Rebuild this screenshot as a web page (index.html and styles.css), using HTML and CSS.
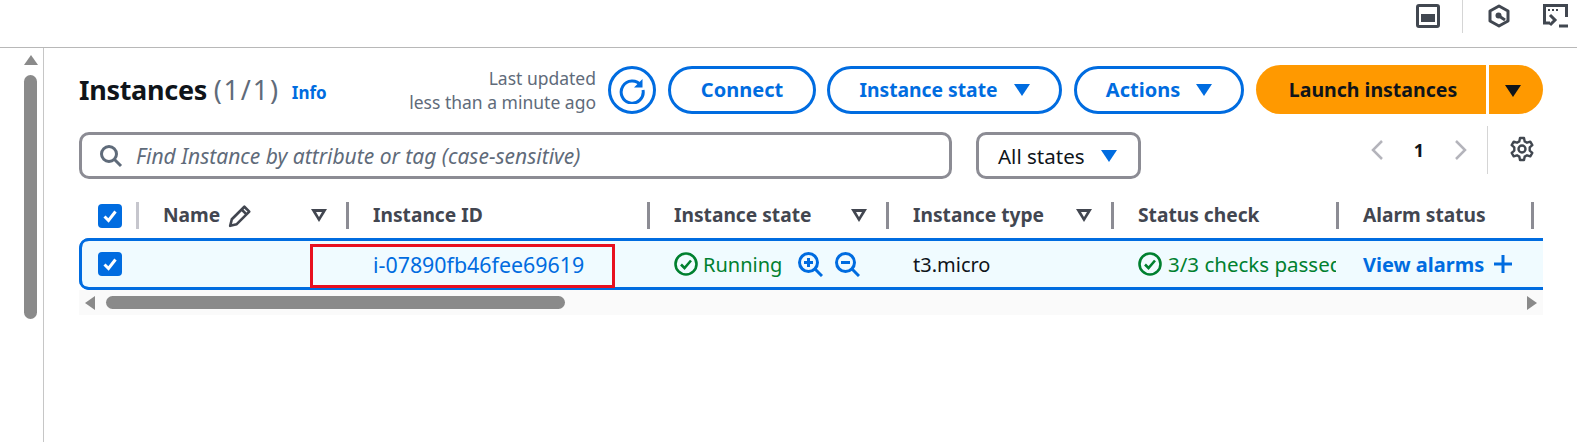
FILE: index.html

```html
<!DOCTYPE html>
<html lang="en">
<head>
  <meta charset="UTF-8">
  <title>Instances</title>
  <link rel="stylesheet" href="styles.css">
</head>
<body>
  <div class="top-bar">
    <svg class="top-icon" width="24" height="24" viewBox="0 0 24 24"><rect x="1.5" y="1.5" width="21" height="21" rx="1.5" fill="none" stroke="#414750" stroke-width="3"/><rect x="5" y="10" width="14" height="8" fill="#414750"/></svg>
    <span class="top-divider"></span>
    <svg class="top-icon" width="24" height="24" viewBox="0 0 24 24"><path d="M12 2 21 7v10l-9 5-9-5V7z" fill="none" stroke="#414750" stroke-width="3" stroke-linejoin="round"/><circle cx="11.5" cy="11.5" r="3" fill="#414750"/><path d="M12 12l6 4" stroke="#414750" stroke-width="3"/></svg>
    <svg class="top-icon" width="25" height="26" viewBox="0 0 25 26"><path d="M7 19H1.500V1.500h22V13" fill="none" stroke="#414750" stroke-width="3"/><path d="M5 5h2v2H5zM9 5h2v2H9zM13 5h2v2h-2z" fill="#414750"/><path d="M7 11l5 5-5 5" fill="none" stroke="#414750" stroke-width="3"/><path d="M16 22h9" stroke="#414750" stroke-width="3"/></svg>
  </div>

  <div class="page">
    <div class="side-scroll">
      <span class="arrow-up"></span>
      <span class="side-thumb"></span>
    </div>

    <div class="content">
      <div class="head-row">
        <h1>Instances <span class="count">(1/1)</span></h1>
        <a class="info">Info</a>
        <div class="updated">Last updated<br>less than a minute ago</div>
        <button class="btn btn-round" aria-label="Refresh">
          <svg width="28" height="28" viewBox="0 0 28 28"><path d="M23 9.500A11 11 0 1 0 25 14" fill="none" stroke="#006ce0" stroke-width="3"/><path d="M24.500 3v8.500H16z" fill="#006ce0"/></svg>
        </button>
        <button class="btn btn-connect">Connect</button>
        <button class="btn btn-state">Instance state<span class="caret"></span></button>
        <button class="btn btn-actions">Actions<span class="caret"></span></button>
        <div class="launch">
          <button class="launch-main">Launch instances</button>
          <button class="launch-drop" aria-label="More"><span class="caret caret-dark"></span></button>
        </div>
      </div>

      <div class="filter-row">
        <div class="search">
          <svg width="24" height="24" viewBox="0 0 24 24"><circle cx="10" cy="10" r="7.500" fill="none" stroke="#5f6b7a" stroke-width="3"/><path d="M15.500 15.500 22 22" stroke="#5f6b7a" stroke-width="3"/></svg>
          <span>Find Instance by attribute or tag (case-sensitive)</span>
        </div>
        <div class="states">All states<span class="caret"></span></div>
        <div class="pager">
          <svg width="14" height="22" viewBox="0 0 14 22"><path d="M12 2 3 11l9 9" fill="none" stroke="#b4b4bb" stroke-width="2.500"/></svg>
          <span class="page-num">1</span>
          <svg width="14" height="22" viewBox="0 0 14 22"><path d="M2 2l9 9-9 9" fill="none" stroke="#b4b4bb" stroke-width="2.500"/></svg>
        </div>
        <div class="prefs">
          <svg width="24" height="26" viewBox="0 0 24 26"><path d="M10 2h4l.7 3.400 2.300 1.300 3.300-1.100 2 3.500-2.600 2.300v3.200l2.600 2.300-2 3.500-3.300-1.100-2.300 1.300L14 24h-4l-.7-3.400L7 19.300l-3.300 1.100-2-3.500 2.600-2.300v-3.200L1.700 9.100l2-3.500L7 6.700l2.300-1.300z" fill="none" stroke="#414750" stroke-width="2.400" stroke-linejoin="round"/><circle cx="12" cy="13" r="3.500" fill="none" stroke="#414750" stroke-width="2.400"/></svg>
        </div>
      </div>

      <div class="grid grid-head">
        <div class="cell cell-check light"><span class="checkbox"><svg width="16" height="16" viewBox="0 0 16 16"><path d="M2.500 8.500 6.500 12.500 13.500 3.500" fill="none" stroke="#fff" stroke-width="3"/></svg></span></div>
        <div class="cell">Name
          <svg class="pencil" width="24" height="24" viewBox="0 0 22 22"><path d="M2 20l1.500-6L15 2.500l4.500 4.500L8 18.500z" fill="none" stroke="#424650" stroke-width="2.400" stroke-linejoin="round"/><path d="M12.500 5l4.500 4.500" stroke="#424650" stroke-width="2.400"/></svg>
          <span class="sort"></span></div>
        <div class="cell">Instance ID</div>
        <div class="cell">Instance state <span class="sort"></span></div>
        <div class="cell">Instance type <span class="sort"></span></div>
        <div class="cell">Status check</div>
        <div class="cell">Alarm status</div>
      </div>

      <div class="grid grid-row">
        <div class="cell cell-check"><span class="checkbox"><svg width="16" height="16" viewBox="0 0 16 16"><path d="M2.500 8.500 6.500 12.500 13.500 3.500" fill="none" stroke="#fff" stroke-width="3"/></svg></span></div>
        <div class="cell"></div>
        <div class="cell"><a class="link link-id">i-07890fb46fee69619</a></div>
        <div class="cell ok">
          <svg width="24" height="24" viewBox="0 0 24 24"><circle cx="12" cy="12" r="10.500" fill="none" stroke="#00802f" stroke-width="2.600"/><path d="M7 12.500l3.500 3.500L17 8.500" fill="none" stroke="#00802f" stroke-width="2.600"/></svg>
          <span>Running</span>
          <svg class="zoom-in" width="25" height="25" viewBox="0 0 25 25"><circle cx="10.500" cy="10.500" r="9" fill="none" stroke="#006ce0" stroke-width="3"/><path d="M17 17l7 7" stroke="#006ce0" stroke-width="3"/><path d="M6 10.500h9M10.500 6v9" stroke="#006ce0" stroke-width="3"/></svg>
          <svg class="zoom-out" width="25" height="25" viewBox="0 0 25 25"><circle cx="10.500" cy="10.500" r="9" fill="none" stroke="#006ce0" stroke-width="3"/><path d="M17 17l7 7" stroke="#006ce0" stroke-width="3"/><path d="M6 10.500h9" stroke="#006ce0" stroke-width="3"/></svg>
        </div>
        <div class="cell">t3.micro</div>
        <div class="cell ok clip">
          <svg width="24" height="24" viewBox="0 0 24 24"><circle cx="12" cy="12" r="10.500" fill="none" stroke="#00802f" stroke-width="2.600"/><path d="M7 12.500l3.500 3.500L17 8.500" fill="none" stroke="#00802f" stroke-width="2.600"/></svg>
          <span class="check-text">3/3 checks passed</span>
        </div>
        <div class="cell"><a class="link link-bold">View alarms</a>
          <svg class="plus" width="20" height="20" viewBox="0 0 20 20"><path d="M1 10h18M10 1v18" stroke="#006ce0" stroke-width="3"/></svg>
        </div>
        <span class="red-box"></span>
      </div>

      <div class="h-scroll">
        <span class="arrow-left"></span>
        <span class="h-thumb"></span>
        <span class="arrow-right"></span>
      </div>
    </div>
  </div>
</body>
</html>
```

FILE: styles.css

```css
* {
  box-sizing: border-box;
}
html, body {
  height: 442px;
  overflow: hidden;
}
body {
  margin: 0;
  background: #fff;
  color: #0f141a;
  font-family: "Noto Sans", sans-serif;
  font-size: 20px;
}
button {
  font-family: inherit;
  cursor: pointer;
}
svg {
  flex-shrink: 0;
}

.top-bar {
  height: 48px;
  border-bottom: 1px solid #b8b8b8;
  display: flex;
  justify-content: flex-end;
  align-items: flex-start;
  padding: 4px 9px 0 0;
}
.top-divider {
  width: 1px;
  height: 33px;
  margin: -4px 24px 0 22px;
  background: #d5d5d5;
}
.top-icon + .top-icon {
  margin-left: 32px;
}

.page {
  display: flex;
  height: 394px;
}
.side-scroll {
  width: 44px;
  border-right: 1px solid #c6c6c6;
  padding: 7px 0 0 24px;
}
.arrow-up {
  display: block;
  width: 0;
  margin-bottom: 10px;
  border-left: 7px solid transparent;
  border-right: 7px solid transparent;
  border-bottom: 10px solid #8a8a8a;
}
.side-thumb {
  display: block;
  width: 13px;
  height: 244px;
  border-radius: 7px;
  background: #8a8a8a;
}

.content {
  flex: 1;
  padding: 17px 34px 0 35px;
}

.head-row {
  display: flex;
  align-items: center;
  height: 49px;
}
h1 {
  margin: 0;
  font-size: 27px;
  font-weight: 700;
  letter-spacing: -0.3px;
}
.count {
  color: #5f6b7a;
  font-weight: 400;
  letter-spacing: 1.800px;
}
.info {
  margin: 6px 0 0 12px;
  color: #006ce0;
  font-size: 17px;
  font-weight: 700;
}
.updated {
  margin-left: auto;
  text-align: right;
  color: #5f6b7a;
  font-size: 17.500px;
  line-height: 24px;
}
.btn {
  height: 48px;
  margin-left: 11px;
  border: 3px solid #006ce0;
  border-radius: 24px;
  background: #fff;
  color: #006ce0;
  font-size: 20px;
  font-weight: 700;
  padding: 0;
  display: flex;
  align-items: center;
  justify-content: center;
  white-space: nowrap;
}
.btn-round {
  width: 48px;
  margin-left: 12px;
}
.btn-connect {
  width: 148px;
  margin-left: 12px;
}
.btn-state {
  width: 235px;
  font-size: 19.300px;
}
.btn-actions {
  width: 170px;
  margin-left: 12px;
}
.caret {
  display: inline-block;
  width: 0;
  margin-left: 16px;
  border-left: 8px solid transparent;
  border-right: 8px solid transparent;
  border-top: 12px solid #006ce0;
}
.caret-dark {
  margin-left: 0;
  border-top-color: #0f141a;
}
.launch {
  display: flex;
  height: 49px;
  margin-left: 12px;
}
.launch-main, .launch-drop {
  border: 0;
  padding: 0;
  height: 49px;
  background: #ff9900;
  color: #0f141a;
  font-size: 19.500px;
  font-weight: 700;
}
.launch-main {
  width: 230px;
  padding-left: 4px;
  border-radius: 25px 0 0 25px;
}
.launch-drop {
  width: 54px;
  margin-left: 3px;
  padding-right: 6px;
  border-radius: 0 25px 25px 0;
}

.filter-row {
  display: flex;
  align-items: flex-start;
  margin-top: 18px;
}
.search {
  width: 873px;
  height: 47px;
  border: 3px solid #8c8c94;
  border-radius: 10px;
  display: flex;
  align-items: center;
  gap: 13px;
  padding-left: 17px;
  color: #5f6b7a;
  font-size: 21px;
  font-style: italic;
}
.states {
  width: 165px;
  height: 47px;
  margin-left: 24px;
  border: 3px solid #8c8c94;
  border-radius: 10px;
  display: flex;
  align-items: center;
  padding-left: 19px;
  font-size: 20.500px;
}
.pager {
  display: flex;
  align-items: center;
  height: 34px;
  margin: 1px 0 0 229px;
}
.page-num {
  width: 70px;
  text-align: center;
  font-size: 18px;
  font-weight: 700;
}
.prefs {
  height: 48px;
  margin: -6px 0 0 19px;
  padding: 10px 0 0 22px;
  border-left: 1px solid #d5d5d5;
}

.grid {
  display: grid;
  grid-template-columns: 60px 210px 301px 239px 225px 225px 195px 9px;
  align-items: center;
}
.grid-head {
  height: 27px;
  margin-top: 23px;
  color: #424650;
  font-size: 19.200px;
  font-weight: 700;
}
.grid-head .cell {
  height: 27px;
  padding-bottom: 3px;
  border-right: 3px solid #8c8c94;
}
.grid-head .cell-check {
  padding-bottom: 0;
}
.grid-head .light {
  border-right-color: #c6c6cd;
}
.cell {
  display: flex;
  align-items: center;
  padding-left: 24px;
  white-space: nowrap;
}
.cell-check {
  padding-left: 19px;
}
.checkbox {
  width: 24px;
  height: 24px;
  border-radius: 4px;
  background: #006ce0;
  display: flex;
  align-items: center;
  justify-content: center;
}
.pencil {
  margin: 4px 0 0 8px;
}
.sort {
  width: 0;
  margin-left: auto;
  margin-top: 3px;
  margin-right: 19px;
  border-left: 8px solid transparent;
  border-right: 8px solid transparent;
  border-top: 13px solid #424650;
  position: relative;
}
.sort::after {
  content: "";
  position: absolute;
  left: -3px;
  top: -10px;
  border-left: 3px solid transparent;
  border-right: 3px solid transparent;
  border-top: 5px solid #fff;
}

.grid-row {
  position: relative;
  height: 52px;
  margin-top: 9px;
  background: #f0fbff;
  border-radius: 10px 0 0 10px;
  box-shadow: inset 3px 0 #006ce0, inset 0 3px #006ce0, inset 0 -3px #006ce0;
  font-size: 20px;
}
.link {
  color: #006ce0;
}
.link-id {
  font-size: 21.400px;
}
.link-bold {
  font-weight: 700;
}
.ok {
  color: #00802f;
  gap: 5px;
}
.check-text {
  margin-left: 1px;
  font-size: 20.500px;
}
.clip {
  overflow: hidden;
  margin-right: 3px;
}
.zoom-in {
  margin-left: 11px;
}
.zoom-out {
  margin-left: 7px;
}
.plus {
  margin-left: 9px;
}
.red-box {
  position: absolute;
  left: 231px;
  top: 6px;
  width: 305px;
  height: 44px;
  border: 3px solid #e8101f;
}

.h-scroll {
  height: 25px;
  background: #fafafa;
  display: flex;
  align-items: center;
  padding-left: 6px;
}
.arrow-left {
  border-top: 7px solid transparent;
  border-bottom: 7px solid transparent;
  border-right: 10px solid #8a8a8a;
}
.h-thumb {
  width: 459px;
  height: 13px;
  margin-left: 11px;
  border-radius: 7px;
  background: #8a8a8a;
}
.arrow-right {
  margin-left: auto;
  margin-right: 6px;
  border-top: 7px solid transparent;
  border-bottom: 7px solid transparent;
  border-left: 10px solid #8a8a8a;
}
```
